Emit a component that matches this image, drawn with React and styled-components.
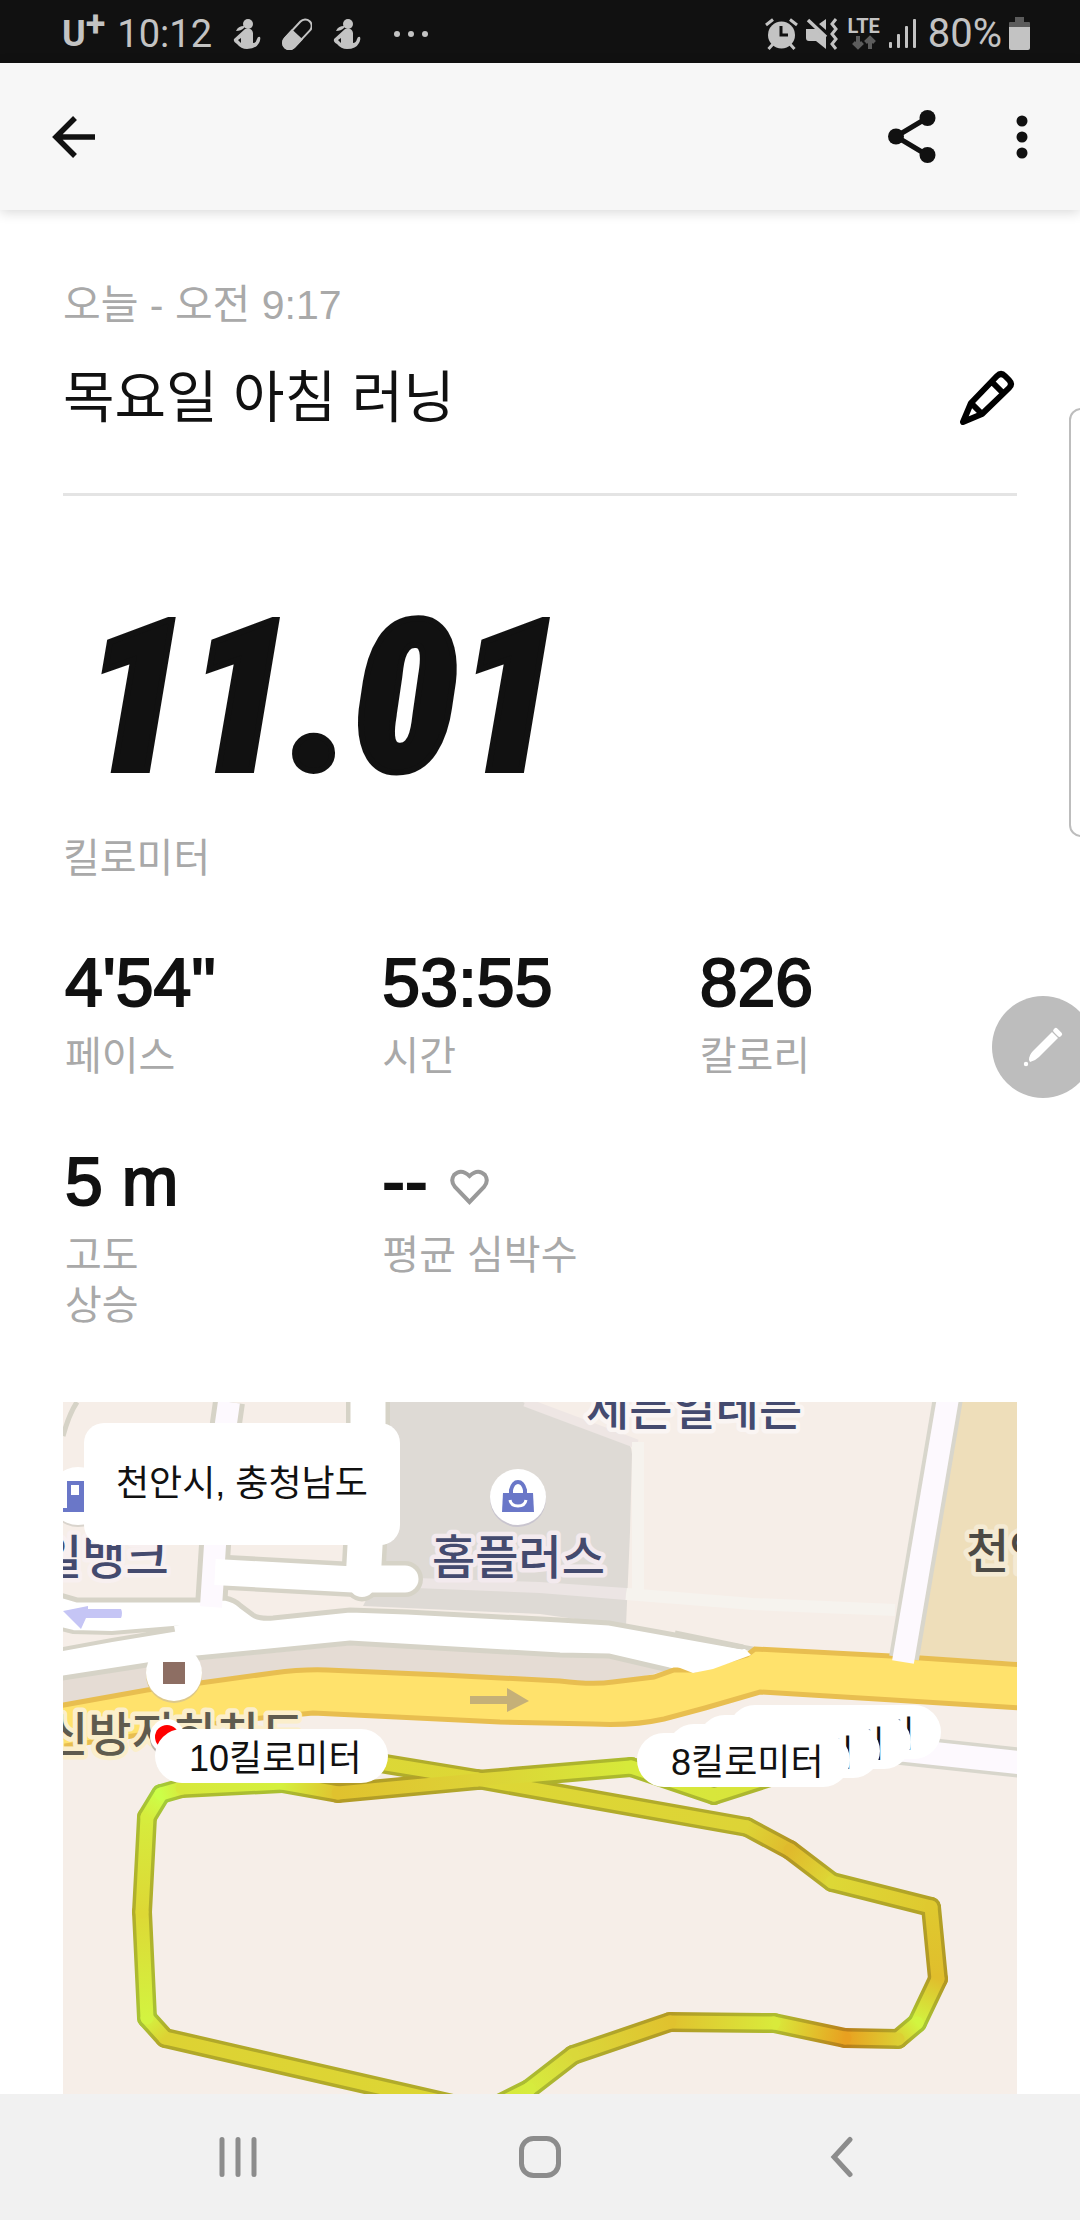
import React from "react";
import styled, { createGlobalStyle } from "styled-components";

const GlobalStyle = createGlobalStyle`
  * { box-sizing: border-box; }
  body {
    margin: 0;
    background: #ffffff;
    color: #111111;
    font-family: "Liberation Sans", "Noto Sans CJK KR", sans-serif;
  }
`;

const Screen = styled.div`
  position: relative;
  display: flex;
  flex-direction: column;
  min-height: 100vh;
  overflow: hidden;
`;

/* ---------- status bar ---------- */

const StatusBar = styled.div`
  display: flex;
  align-items: center;
  justify-content: space-between;
  height: 63px;
  padding: 4px 50px 0 62px;
  background: #111111;
  color: #c3c3c3;
  font-family: Roboto, "Liberation Sans", sans-serif;
  font-size: 40px;
  line-height: 48px;
`;

const StatusGroup = styled.div`
  display: flex;
  align-items: center;
  gap: ${(p) => p.$gap}px;
`;

const Carrier = styled.span`
  display: flex;
  align-items: flex-start;
  font-family: Roboto, "Liberation Sans", sans-serif;
  font-size: 36px;
  font-weight: 700;
  line-height: 42px;
`;

const CarrierPlus = styled.span`
  line-height: 22px;
`;

const Clock = styled.time`
  font-size: 38px;
`;

const Network = styled.span`
  display: flex;
  flex-direction: column;
  align-items: center;
  width: 36px;
  font-size: 20px;
  font-weight: 700;
  line-height: 18px;
`;

/* ---------- app bar ---------- */

const AppBar = styled.header`
  position: relative;
  display: flex;
  align-items: center;
  justify-content: space-between;
  height: 147px;
  padding: 0 34px 0 50px;
  background: #f7f7f7;
  box-shadow: 0 2px 12px rgba(0, 0, 0, 0.16);
`;

const Actions = styled.div`
  display: flex;
  gap: 62px;
`;

const IconButton = styled.button`
  display: flex;
  align-items: center;
  justify-content: center;
  padding: 0;
  border: 0;
  background: none;
  color: inherit;
  cursor: pointer;
`;

/* ---------- run summary ---------- */

const Content = styled.main`
  display: flex;
  flex: 1;
  flex-direction: column;
  padding: 70px 63px 0;
`;

const RunHeader = styled.section`
  display: flex;
  flex-direction: column;
  gap: 36px;
  padding-bottom: 63px;
  border-bottom: 3px solid #e4e4e4;
`;

const Caption = styled.span`
  color: #a9a9a9;
  font-size: ${(p) => (p.$large ? 41 : 40)}px;
  line-height: 50px;
`;

const TitleRow = styled.div`
  display: flex;
  align-items: center;
  justify-content: space-between;
`;

const Title = styled.h1`
  margin: 0;
  font-size: 56px;
  font-weight: 400;
  line-height: 64px;
`;

const Distance = styled.section`
  display: flex;
  flex-direction: column;
  gap: 25px;
  padding: 92px 0 63px;
`;

const DistanceValue = styled.strong`
  padding-left: 20px;
  font-family: "Roboto Condensed", "Open Sans Condensed", Roboto, sans-serif;
  font-size: 210px;
  font-style: italic;
  font-weight: 900;
  line-height: 220px;
  -webkit-text-stroke: 6px #111111;
`;

const Stats = styled.dl`
  display: grid;
  grid-template-columns: repeat(3, 1fr);
  row-gap: 64px;
  margin: 0 0 72px;
  padding-left: 2px;
`;

const Stat = styled.div`
  display: flex;
  flex-direction: column-reverse;
  justify-content: flex-end;
  gap: 13px;
`;

const StatLabel = styled.dt`
  max-width: ${(p) => (p.$narrow ? "120px" : "none")};
  color: #a9a9a9;
  font-size: 40px;
  line-height: 50px;
  word-break: keep-all;
`;

const StatValue = styled.dd`
  display: flex;
  align-items: center;
  gap: 22px;
  margin: 0;
  font-size: 68px;
  line-height: 72px;
  -webkit-text-stroke: 2px #111111;
`;

/* ---------- map ---------- */

const MapCard = styled.section`
  position: relative;
  flex: 1;
  min-height: 480px;
  overflow: hidden;
  background: #f6eee8;
`;

const MapDrawing = styled.svg`
  position: absolute;
  top: 0;
  left: 0;
  display: block;
  font-family: "Noto Sans CJK KR", sans-serif;
`;

const Place = styled.div`
  position: absolute;
  top: 21px;
  left: 21px;
  display: flex;
  align-items: center;
  height: 122px;
  padding: 0 32px;
  border-radius: 20px;
  background: #ffffff;
  font-size: 36px;
  line-height: 44px;
`;

const KmMarker = styled.div`
  position: absolute;
  top: ${(p) => p.$y}px;
  left: ${(p) => p.$x}px;
  height: 54px;
  padding: 0 26px 0 34px;
  border-radius: 27px;
  background: #ffffff;
  font-size: 36px;
  line-height: 60px;
  white-space: nowrap;
`;

/* ---------- overlays and navigation ---------- */

const EdgeHandle = styled.div`
  position: absolute;
  top: 408px;
  right: -13px;
  width: 24px;
  height: 429px;
  border: 2px solid #bdbdbd;
  border-radius: 14px;
  background: #ffffff;
`;

const PenButton = styled.button`
  position: absolute;
  top: 996px;
  right: -14px;
  width: 102px;
  height: 102px;
  padding: 0;
  border: 0;
  border-radius: 50%;
  background: #bdbdbd;
`;

const NavBar = styled.nav`
  display: grid;
  grid-template-columns: repeat(3, 1fr);
  height: 126px;
  padding: 0 87px;
  background: #f1f1f1;
  color: #8c8c8c;
`;

/* ---------- icons ---------- */

const FigureIcon = () => (
  <svg width="30" height="32" viewBox="0 0 30 32" fill="#c3c3c3" aria-hidden="true">
    <circle cx="16" cy="6" r="5" />
    <path d="M4 13Q6 8 12 8L12 10Q9 13 4 13Z" />
    <path
      fillRule="evenodd"
      d="M13 11L2 21Q1 24 5 26Q9 31 15 31Q24 31 27 25Q29 21 28 19Q26 18 25 21Q24 25 21 25L21 15Q20 9 13 11ZM6 22L9 20L9 25Z"
    />
  </svg>
);

const PillIcon = () => (
  <svg width="30" height="32" viewBox="0 0 30 32" aria-hidden="true">
    <g transform="rotate(43 15 16)" stroke="#c3c3c3" strokeWidth="2">
      <rect x="9" y="-2" width="13" height="36" rx="6.5" fill="none" />
      <path d="M9 17H22V27.5A6.5 6.5 0 0 1 9 27.5Z" fill="#c3c3c3" />
    </g>
  </svg>
);

const MoreDots = () => (
  <svg width="46" height="8" viewBox="0 0 46 8" fill="#c3c3c3" aria-hidden="true">
    <circle cx="15" cy="4" r="3" />
    <circle cx="29" cy="4" r="3" />
    <circle cx="43" cy="4" r="3" />
  </svg>
);

const AlarmIcon = () => (
  <svg width="33" height="32" viewBox="0 0 33 32" fill="none" stroke="#c3c3c3" strokeWidth="3" aria-hidden="true">
    <circle cx="16.5" cy="17" r="13.5" fill="#c3c3c3" stroke="none" />
    <path d="M1 7L8 1.500M32 7L25 1.500M3.500 31L8 26M29.500 31L25 26" />
    <path d="M16 8V17H23" stroke="#111111" />
  </svg>
);

const MuteIcon = () => (
  <svg width="34" height="32" viewBox="0 0 34 32" aria-hidden="true">
    <path d="M1 11H11L21 19V31L11 23H4Q1 23 1 20ZM14 6L21 1V12Z" fill="#c3c3c3" />
    <path d="M3 2L21 19" stroke="#c3c3c3" strokeWidth="3.500" />
    <path d="M31 1L27 6L31 11L27 16L31 21L27 26L31 31" fill="none" stroke="#c3c3c3" strokeWidth="3" />
  </svg>
);

const DataArrows = () => (
  <svg width="24" height="15" viewBox="0 0 24 15" fill="none" stroke="#5c5c5c" strokeWidth="4" aria-hidden="true">
    <path d="M6 1V12M1.500 7.500L6 12L10.500 7.500M18 14V3M13.500 7.500L18 3L22.500 7.500" />
  </svg>
);

const SignalIcon = () => (
  <svg width="32" height="32" viewBox="0 0 32 32" fill="#c3c3c3" aria-hidden="true">
    <rect x="0" y="24" width="3" height="6" rx="1" />
    <rect x="8" y="16" width="3" height="14" rx="1" />
    <rect x="16" y="8" width="3" height="22" rx="1" />
    <rect x="24" y="1" width="3" height="29" rx="1" />
  </svg>
);

const BatteryIcon = () => (
  <svg width="21" height="33" viewBox="0 0 21 33" aria-hidden="true">
    <path d="M6 0H15V5H20Q21 5 21 6V10H0V6Q0 5 1 5H6Z" fill="#5c5c5c" />
    <path d="M0 10H21V31Q21 33 19 33H2Q0 33 0 31Z" fill="#c3c3c3" />
  </svg>
);

const BackArrow = () => (
  <svg width="48" height="48" viewBox="0 0 48 48" fill="none" stroke="#111111" strokeWidth="5.500" aria-hidden="true">
    <path d="M25 5L6 24L25 43M6 24H45" />
  </svg>
);

const ShareIcon = () => (
  <svg width="48" height="54" viewBox="0 0 48 54" fill="#111111" aria-hidden="true">
    <path d="M39 8L8 26.500L39 45" fill="none" stroke="#111111" strokeWidth="5" />
    <circle cx="8" cy="26.500" r="8" />
    <circle cx="39.500" cy="8" r="8" />
    <circle cx="39.500" cy="45" r="8" />
  </svg>
);

const MoreIcon = () => (
  <svg width="48" height="48" viewBox="0 0 48 48" fill="#111111" aria-hidden="true">
    <circle cx="24" cy="8" r="5.500" />
    <circle cx="24" cy="24" r="5.500" />
    <circle cx="24" cy="40" r="5.500" />
  </svg>
);

const EditIcon = () => (
  <svg
    width="58"
    height="56"
    viewBox="0 0 58 56"
    fill="none"
    stroke="#000000"
    strokeWidth="6"
    strokeLinejoin="round"
    aria-hidden="true"
  >
    <path d="M4 52L12 33L38 6Q42 2 46 6L50 10Q54 14 50 18L23 44ZM33 12L44 23M12 33L23 44" />
  </svg>
);

const HeartIcon = () => (
  <svg width="39" height="48" viewBox="0 -12 39 48" fill="none" stroke="#999999" strokeWidth="4" aria-hidden="true">
    <path d="M19.500 33L5 18Q0 12 4 6Q11 -1 19.500 7Q28 -1 35 6Q39 12 34 18Z" />
  </svg>
);

const PenIcon = () => (
  <svg width="102" height="102" viewBox="0 0 102 102" fill="#ffffff" aria-hidden="true">
    <path d="M37 64Q37 59 41 55L60 36L66 42L47 61Q43 65 38 66Z" />
    <rect x="61" y="34" width="10" height="5" rx="2" transform="rotate(45 66 36)" />
    <circle cx="34" cy="68" r="2.200" />
  </svg>
);

/* ---------- route ---------- */

const ROUTE_OUT = [
  [250, 350, [219, 216, 56]],
  [414, 377, [221, 215, 53]],
  [684, 425, [221, 212, 54]],
  [727, 448, [224, 186, 44]],
  [769, 480, [221, 216, 54]],
  [868, 505, [223, 201, 47]],
  [875, 577, [224, 190, 44]],
  [854, 621, [210, 245, 64]],
  [835, 637, [220, 207, 51]],
  [782, 636, [232, 160, 32]],
  [711, 621, [217, 234, 59]],
  [607, 620, [224, 194, 46]],
  [510, 653, [218, 216, 58]],
  [466, 687, [214, 236, 62]],
  [410, 715, [216, 224, 58]],
];

const ROUTE_BACK = [
  [420, 709, [221, 215, 53]],
  [102, 636, [221, 210, 51]],
  [84, 616, [211, 243, 64]],
  [79, 510, [221, 216, 53]],
  [84, 415, [214, 236, 61]],
  [98, 392, [204, 255, 72]],
  [119, 386, [215, 232, 60]],
  [219, 381, [213, 240, 62]],
  [275, 391, [224, 194, 46]],
  [414, 378, [221, 210, 54]],
  [568, 365, [214, 234, 58]],
  [651, 393, [216, 230, 59]],
  [760, 358, [216, 224, 58]],
];

const SEGMENTS = [ROUTE_OUT, ROUTE_BACK].flatMap((line, l) =>
  line.slice(1).map((to, i) => ({ id: `${l}-${i}`, from: line[i], to }))
);

const rgb = (color, k) => `rgb(${color.map((c) => Math.round(c * k)).join(",")})`;

const RouteLayer = ({ name, shade, width }) => (
  <g strokeWidth={width} strokeLinecap="round">
    {SEGMENTS.map(({ id, from, to }) => (
      <React.Fragment key={id}>
        <linearGradient
          id={`${name}-${id}`}
          gradientUnits="userSpaceOnUse"
          x1={from[0]}
          y1={from[1]}
          x2={to[0]}
          y2={to[1]}
        >
          <stop offset="0" stopColor={rgb(from[2], shade)} />
          <stop offset="1" stopColor={rgb(to[2], shade)} />
        </linearGradient>
        <line x1={from[0]} y1={from[1]} x2={to[0]} y2={to[1]} stroke={`url(#${name}-${id})`} />
      </React.Fragment>
    ))}
  </g>
);

const MapLabel = styled.text`
  fill: ${(p) => p.$color};
  stroke: ${(p) => p.$halo};
  stroke-width: 9px;
  stroke-linejoin: round;
  paint-order: stroke;
  font-size: 47px;
  font-weight: 500;
`;

const RouteMap = () => (
  <MapDrawing width="954" height="692" viewBox="0 0 954 692" role="img" aria-label="러닝 경로 지도">
    {/* blocks */}
    <path d="M327 0H460L560 38Q569 42 569 52L567 130L563 224L477 212L300 204L322 160Z" fill="#dedad5" />
    <path d="M352 176L477 180L563 186V198L477 191L352 186Z" fill="#ece5e4" />
    <path d="M462 0L574 42" stroke="#eee6e4" strokeWidth="9" />
    <path d="M575 40V190M563 192L690 202L832 208" fill="none" stroke="#f6f3ee" strokeWidth="12" />
    <path d="M898 0H954V260L852 254Z" fill="#eedeba" />
    <path d="M0 277L84 263L287 243L497 254L546 255L606 268L542 284L264 270L84 290L0 305Z" fill="#e5dcd4" />

    {/* minor roads */}
    <g fill="none" stroke="#d6d3c7">
      <path d="M14 0Q6 12 0 34" strokeWidth="5" />
      <path d="M166 0L163 21L152 143L148 205" strokeWidth="32" />
      <path d="M305 0V90L300 180" strokeWidth="44" />
      <path d="M155 170L300 178" strokeWidth="35" />
      <path d="M299 177H342" strokeWidth="36" strokeLinecap="round" />
      <circle cx="299" cy="182" r="15" strokeWidth="5" />
    </g>

    {/* frontage road */}
    <path
      d="M-6 192L14 198H139L162 196Q172 198 178 204L190 213Q196 217 210 216L287 208L344 210L497 218L546 221L690 247V262L640 275L606 268L546 254L497 253L287 241L134 256L84 263L-6 277Z"
      fill="#ffffff"
      stroke="#d6d3c7"
      strokeWidth="5"
    />
    <path d="M-6 226L10 230L49 231L134 224L49 238L-6 248Z" fill="#f6eee8" stroke="#d6d3c7" strokeWidth="4" />
    <path d="M112 229L180 216" stroke="#ffffff" strokeWidth="10" />

    <g fill="none" stroke="#ffffff">
      <path d="M166 0L163 21L152 143L148 205" stroke="#fdf9fe" strokeWidth="22" />
      <path d="M305 0V90L300 180" strokeWidth="35" />
      <path d="M152 170L300 178" strokeWidth="26" />
      <path d="M299 177H342" strokeWidth="27" strokeLinecap="round" />
      <circle cx="299" cy="182" r="8" strokeWidth="10" />
    </g>

    {/* main road */}
    <path
      d="M-5 304L84 288L137 281L210 271Q240 267 264 268L380 273L497 279Q530 283 550 280L591 275L611 268L632 268L684 253L692 247L828 254L960 263V306L830 298L697 290L642 306L601 317Q570 324 530 322L437 320L250 311L177 318L-5 345Z"
      fill="#ffe26c"
      stroke="#e8be50"
      strokeWidth="5"
    />
    <path d="M612 264L630 271L650 267L688 253L682 247L640 250Z" fill="#ffffff" />
    <path d="M612 231L680 245" stroke="#d6d3c7" strokeWidth="5" />

    {/* side roads */}
    <path d="M885 -4L841 256" stroke="#d8d6cc" strokeWidth="30" />
    <path d="M885 -4L840 260" stroke="#fdf9fe" strokeWidth="22" />
    <path d="M820 346L960 361" stroke="#d8d6cc" strokeWidth="30" />
    <path d="M820 346L960 361" stroke="#fdf9fe" strokeWidth="23" />

    {/* direction arrows */}
    <path d="M0 209L25 204V207H58Q60 211 58 216H23L18 227Z" fill="#c5c5f5" />
    <path d="M407 294H444V286L466 299L444 310V302H407Z" fill="#c5b078" />

    {/* points of interest */}
    <circle cx="15" cy="96" r="29" fill="#d9d4cd" />
    <circle cx="15" cy="94" r="29" fill="#ffffff" />
    <path d="M4 79H24V110H0V106H4ZM8 83V93H16V83Z" fill="#6a77c8" fillRule="evenodd" />
    <circle cx="455" cy="97" r="28" fill="#c9c5cf" />
    <circle cx="455" cy="95" r="28" fill="#ffffff" />
    <path d="M440 91H470L471 110H439Z" fill="#6a77c8" />
    <path d="M448 92V88Q450 80 455 80Q460 80 462 88V92" fill="none" stroke="#6a77c8" strokeWidth="4" />
    <path d="M447 98Q448 104 455 104Q462 104 463 98" fill="none" stroke="#ffffff" strokeWidth="3" />
    <circle cx="111" cy="273" r="28" fill="#ddc88a" />
    <circle cx="111" cy="271" r="28" fill="#ffffff" />
    <rect x="100" y="260" width="22" height="22" fill="#8d6e63" />

    <MapLabel x="-24" y="172" $color="#444a6e" $halo="#f8f0f0">일뱅크</MapLabel>
    <MapLabel x="369" y="172" $color="#444a6e" $halo="#f3eaee">홈플러스</MapLabel>
    <MapLabel x="523" y="23" $color="#444a6e" $halo="#faf5f3">세븐일레븐</MapLabel>
    <MapLabel x="903" y="166" $color="#4c4a45" $halo="#f4ead3">천안</MapLabel>
    <MapLabel x="-18" y="349" $color="#5f5b4e" $halo="#fbeecb">신방지하차도</MapLabel>

    <RouteLayer name="edge" shade={0.8} width={20} />
    <RouteLayer name="track" shade={1} width={13} />

    <circle cx="104" cy="337" r="17" fill="#b9b2ac" />
    <circle cx="104" cy="334" r="17" fill="#ffffff" />
    <circle cx="104" cy="335" r="12" fill="#ff0000" />
  </MapDrawing>
);

const MARKERS = [
  { label: "5킬로미터", x: 665, y: 303 },
  { label: "6킬로미터", x: 635, y: 313 },
  { label: "7킬로미터", x: 604, y: 322 },
  { label: "8킬로미터", x: 574, y: 331 },
  { label: "10킬로미터", x: 92, y: 327 },
];

const STATS = [
  { label: "페이스", value: "4'54\"" },
  { label: "시간", value: "53:55" },
  { label: "칼로리", value: "826" },
  { label: "고도 상승", value: "5 m", narrow: true },
  { label: "평균 심박수", value: "--", icon: <HeartIcon /> },
];

export default function App() {
  return (
    <>
      <GlobalStyle />
      <Screen>
        <StatusBar>
          <StatusGroup $gap={20}>
            <StatusGroup $gap={12}>
              <Carrier>
                U<CarrierPlus>+</CarrierPlus>
              </Carrier>
              <Clock>10:12</Clock>
            </StatusGroup>
            <FigureIcon />
            <PillIcon />
            <FigureIcon />
            <MoreDots />
          </StatusGroup>
          <StatusGroup $gap={7}>
            <AlarmIcon />
            <MuteIcon />
            <Network>
              LTE
              <DataArrows />
            </Network>
            <SignalIcon />
            <span>80%</span>
            <BatteryIcon />
          </StatusGroup>
        </StatusBar>

        <AppBar>
          <IconButton aria-label="뒤로">
            <BackArrow />
          </IconButton>
          <Actions>
            <IconButton aria-label="공유">
              <ShareIcon />
            </IconButton>
            <IconButton aria-label="더보기">
              <MoreIcon />
            </IconButton>
          </Actions>
        </AppBar>

        <Content>
          <RunHeader>
            <Caption $large>오늘 - 오전 9:17</Caption>
            <TitleRow>
              <Title>목요일 아침 러닝</Title>
              <IconButton aria-label="제목 편집">
                <EditIcon />
              </IconButton>
            </TitleRow>
          </RunHeader>

          <Distance>
            <DistanceValue>11.01</DistanceValue>
            <Caption>킬로미터</Caption>
          </Distance>

          <Stats>
            {STATS.map((s) => (
              <Stat key={s.label}>
                <StatLabel $narrow={s.narrow}>{s.label}</StatLabel>
                <StatValue>
                  {s.value}
                  {s.icon}
                </StatValue>
              </Stat>
            ))}
          </Stats>

          <MapCard>
            <RouteMap />
            {MARKERS.map((m) => (
              <KmMarker key={m.label} $x={m.x} $y={m.y}>
                {m.label}
              </KmMarker>
            ))}
            <Place>천안시, 충청남도</Place>
          </MapCard>
        </Content>

        <NavBar>
          <IconButton aria-label="최근 앱">
            <svg width="42" height="42" viewBox="0 0 42 42" stroke="currentColor" strokeWidth="5" strokeLinecap="round">
              <path d="M5 3.500V38.500M21 3.500V38.500M37 3.500V38.500" />
            </svg>
          </IconButton>
          <IconButton aria-label="홈">
            <svg width="42" height="42" viewBox="0 0 42 42" fill="none" stroke="currentColor" strokeWidth="5">
              <rect x="2.500" y="2.500" width="37" height="37" rx="12" />
            </svg>
          </IconButton>
          <IconButton aria-label="뒤로 가기">
            <svg
              width="24"
              height="42"
              viewBox="0 0 24 42"
              fill="none"
              stroke="currentColor"
              strokeWidth="5"
              strokeLinecap="round"
            >
              <path d="M20 3.500L4 21L20 38.500" />
            </svg>
          </IconButton>
        </NavBar>

        <EdgeHandle />
        <PenButton aria-label="메모">
          <PenIcon />
        </PenButton>
      </Screen>
    </>
  );
}
